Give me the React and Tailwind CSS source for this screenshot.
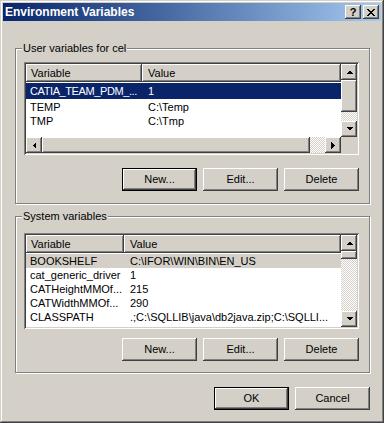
import React from 'react'

const raised =
  'shadow-[inset_-1px_-1px_0_#404040,inset_1px_1px_0_#ffffff,inset_-2px_-2px_0_#808080,inset_2px_2px_0_#d4d0c8]'
const raisedDefault =
  'shadow-[inset_0_0_0_1px_#000000,inset_-2px_-2px_0_#404040,inset_2px_2px_0_#ffffff,inset_-3px_-3px_0_#808080]'
const sunken =
  'shadow-[inset_1px_1px_0_#808080,inset_-1px_-1px_0_#ffffff,inset_2px_2px_0_#404040,inset_-2px_-2px_0_#d4d0c8]'
const checker =
  'bg-[image:repeating-conic-gradient(#ffffff_0_25%,#d4d0c8_0_50%)] bg-[length:2px_2px]'

const Arrow = ({ dir }) => {
  const pts = {
    up: '0,4 7,4 3.5,0.5',
    down: '0,0 7,0 3.5,3.5',
    left: '4,0 4,7 0.5,3.5',
    right: '0,0 0,7 3.5,3.5',
  }
  const vertical = dir === 'up' || dir === 'down'
  return (
    <svg
      width={vertical ? 7 : 4}
      height={vertical ? 4 : 7}
      viewBox={vertical ? '0 0 7 4' : '0 0 4 7'}
      shapeRendering="crispEdges"
    >
      <polygon points={pts[dir]} fill="#000" />
    </svg>
  )
}

const ScrollBtn = ({ dir }) => (
  <div className={`w-[16px] h-[16px] shrink-0 bg-[#d4d0c8] flex items-center justify-center ${raised}`}>
    <Arrow dir={dir} />
  </div>
)

const Button = ({ children, isDefault }) => (
  <div
    className={`w-[75px] h-[23px] flex items-center justify-center text-[11px] text-black bg-[#d4d0c8] ${
      isDefault ? raisedDefault : raised
    }`}
  >
    {children}
  </div>
)

const Group = ({ label, className, children }) => (
  <div className={`relative border border-[#808080] shadow-[inset_1px_1px_0_#ffffff,1px_1px_0_#ffffff] ${className}`}>
    <span className="absolute left-[6px] top-[-8px] bg-[#d4d0c8] px-[1px] text-[11px] leading-[14px] text-black">
      {label}
    </span>
    {children}
  </div>
)

const Header = ({ firstWidth }) => (
  <div className="flex h-[18px] shrink-0 text-[11px] leading-[18px] text-black">
    <div className={`h-full pl-[5px] bg-[#d4d0c8] ${raised}`} style={{ width: firstWidth }}>
      Variable
    </div>
    <div className={`h-full flex-1 pl-[6px] bg-[#d4d0c8] ${raised}`}>Value</div>
  </div>
)

const Row = ({ name, value, firstWidth, className = '', nameClass = '' }) => (
  <div className={`flex h-[14px] shrink-0 text-[11px] leading-[14px] whitespace-nowrap ${className}`}>
    <div className={`pl-[4px] overflow-hidden shrink-0 ${nameClass}`} style={{ width: firstWidth }}>
      {name}
    </div>
    <div className="flex-1 pl-[6px] overflow-hidden">{value}</div>
  </div>
)

const UserList = () => (
  <div className={`h-[93px] p-[2px] bg-white ${sunken}`}>
    <div className="flex flex-col h-full">
      <div className="flex h-[73px]">
        <div className="flex-1 flex flex-col overflow-hidden">
          <Header firstWidth={116} />
          <Row
            name="CATIA_TEAM_PDM_..."
            value="1"
            firstWidth={116}
            nameClass="tracking-[-0.4px]"
            className="h-[16px] leading-[16px] mt-[1px] bg-[#0a246a] text-white"
          />
          <Row name="TEMP" value="C:\Temp" firstWidth={116} className="mt-[1px] text-black" />
          <Row name="TMP" value="C:\Tmp" firstWidth={116} className="text-black" />
        </div>
        <div className="w-[16px] flex flex-col">
          <ScrollBtn dir="up" />
          <div className={`h-[32px] bg-[#d4d0c8] ${raised}`} />
          <div className={`flex-1 ${checker}`} />
          <ScrollBtn dir="down" />
        </div>
      </div>
      <div className="flex h-[16px]">
        <ScrollBtn dir="left" />
        <div className={`w-[268px] bg-[#d4d0c8] ${raised}`} />
        <div className={`flex-1 ${checker}`} />
        <ScrollBtn dir="right" />
        <div className="w-[16px] bg-[#d4d0c8]" />
      </div>
    </div>
  </div>
)

const systemRows = [
  ['BOOKSHELF', 'C:\\IFOR\\WIN\\BIN\\EN_US'],
  ['cat_generic_driver', '1'],
  ['CATHeightMMOf...', '215'],
  ['CATWidthMMOf...', '290'],
  ['CLASSPATH', '.;C:\\SQLLIB\\java\\db2java.zip;C:\\SQLLI...'],
]

const SystemList = () => (
  <div className={`h-[96px] p-[2px] bg-white ${sunken}`}>
    <div className="flex h-full">
      <div className="flex-1 flex flex-col overflow-hidden">
        <Header firstWidth={98} />
        {systemRows.map(([n, v], i) => (
          <Row
            key={n}
            name={n}
            value={v}
            firstWidth={98}
            className={i === 0 ? 'mt-[1px] bg-[#d4d0c8] text-black' : 'text-black'}
          />
        ))}
      </div>
      <div className="w-[16px] flex flex-col">
        <ScrollBtn dir="up" />
        <div className={`h-[8px] bg-[#d4d0c8] ${raised}`} />
        <div className={`flex-1 ${checker}`} />
        <ScrollBtn dir="down" />
      </div>
    </div>
  </div>
)

export default function App() {
  return (
    <div
      className={`w-[384px] h-[423px] bg-[#d4d0c8] p-[3px] flex flex-col font-['Liberation_Sans',Arial,sans-serif] shadow-[inset_-1px_-1px_0_#404040,inset_1px_1px_0_#d4d0c8,inset_-2px_-2px_0_#808080,inset_2px_2px_0_#ffffff]`}
    >
      {/* Title bar */}
      <div className="h-[18px] shrink-0 flex items-center pl-[2px] pr-[2px] bg-gradient-to-r from-[#0a246a] to-[#a6caf0]">
        <span className="flex-1 text-white font-bold text-[12px] leading-[18px]">Environment Variables</span>
        <div className={`w-[16px] h-[14px] flex items-center justify-center bg-[#d4d0c8] text-black font-bold text-[11px] leading-[14px] ${raised}`}>
          ?
        </div>
        <div className={`ml-[2px] w-[16px] h-[14px] flex items-center justify-center bg-[#d4d0c8] ${raised}`}>
          <svg width="8" height="7" viewBox="0 0 8 7" shapeRendering="crispEdges">
            <path d="M0 0h2v1h1v1h2V1h1V0h2v1H7v1H6v1H5v1h1v1h1v1h1v1H6V6H5V5H3v1H2v1H0V6h1V5h1V4h1V3H2V2H1V1H0z" fill="#000" />
          </svg>
        </div>
      </div>

      {/* User variables */}
      <Group label="User variables for cel" className="mt-[27px] ml-[12px] w-[355px] h-[156px] pt-[13px] pl-[8px] pr-[10px]">
        <UserList />
        <div className="flex justify-end gap-[6px] mt-[13px]">
          <Button isDefault>New...</Button>
          <Button>Edit...</Button>
          <Button>Delete</Button>
        </div>
      </Group>

      {/* System variables */}
      <Group label="System variables" className="mt-[12px] ml-[12px] w-[355px] h-[157px] pt-[16px] pl-[8px] pr-[10px]">
        <SystemList />
        <div className="flex justify-end gap-[6px] mt-[9px]">
          <Button>New...</Button>
          <Button>Edit...</Button>
          <Button>Delete</Button>
        </div>
      </Group>

      {/* Dialog buttons */}
      <div className="flex justify-end gap-[6px] mt-[14px] w-[367px]">
        <Button isDefault>OK</Button>
        <Button>Cancel</Button>
      </div>
    </div>
  )
}
